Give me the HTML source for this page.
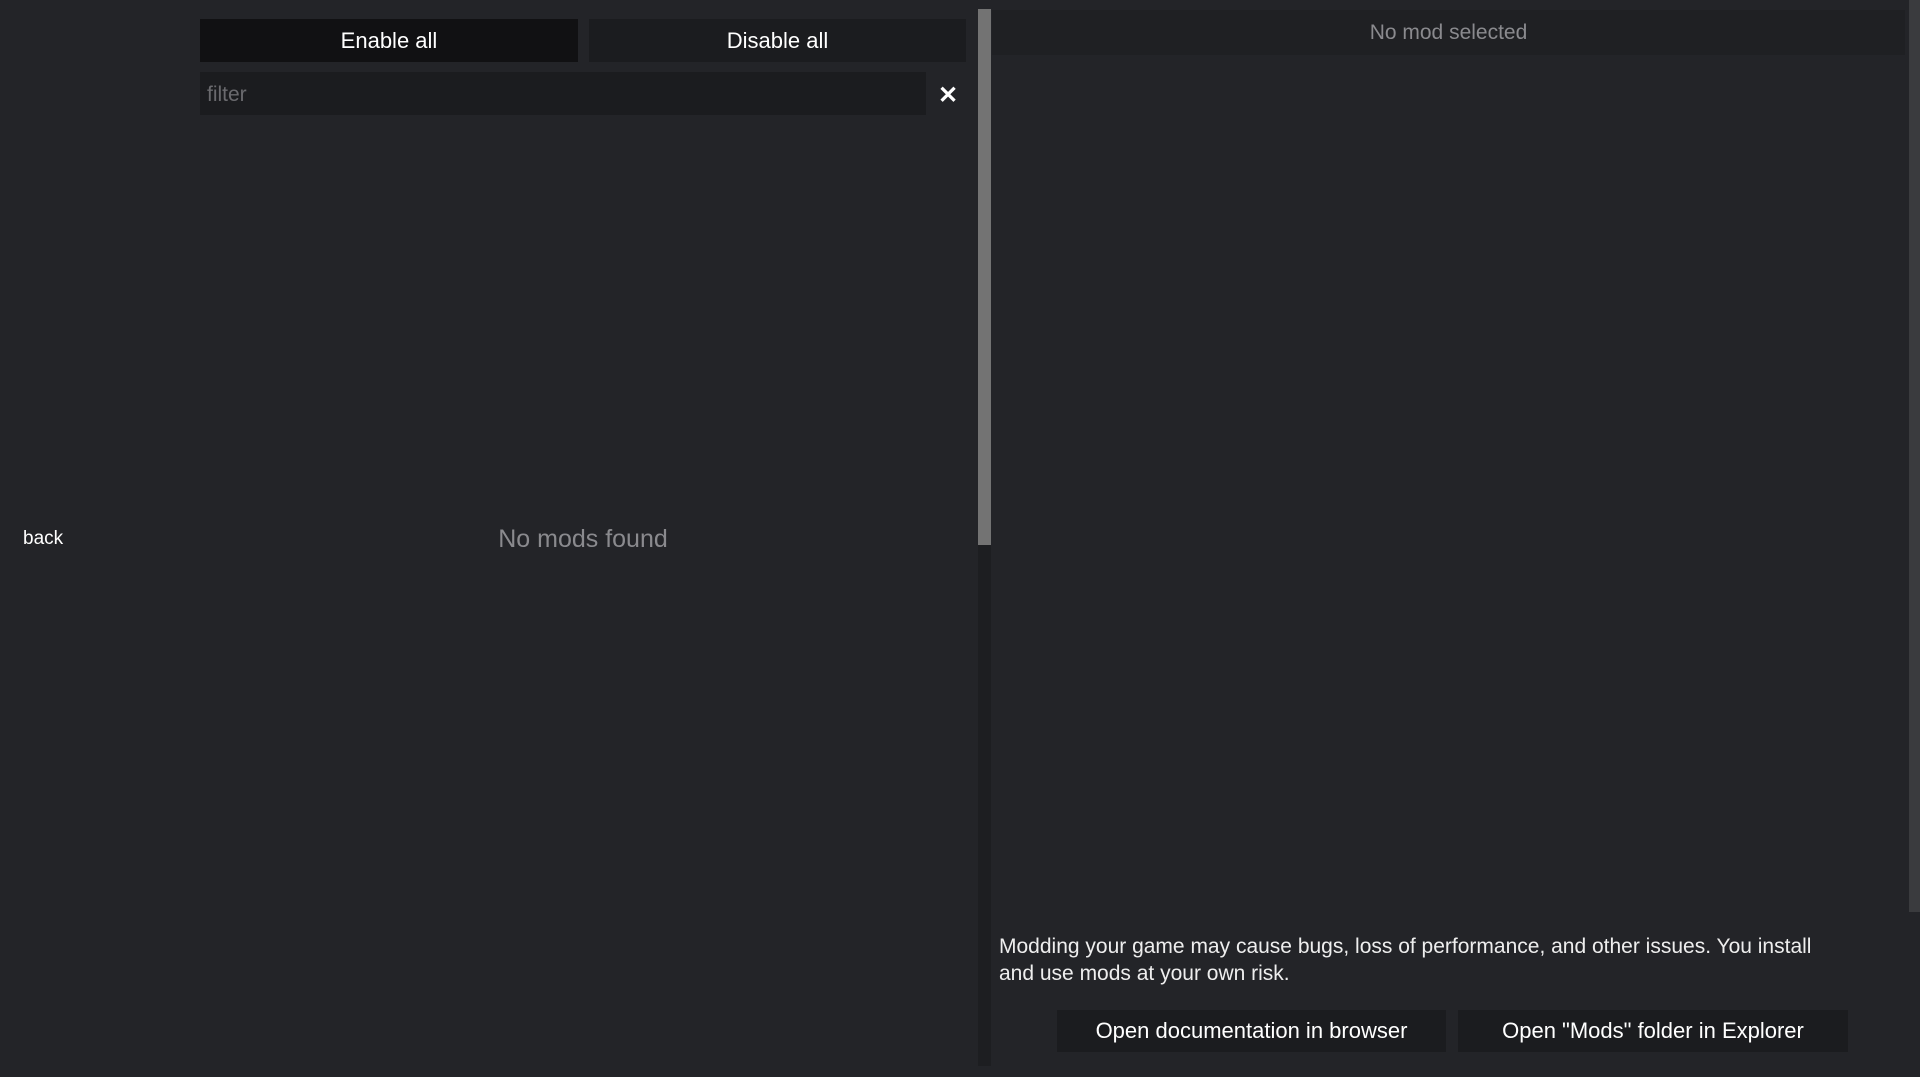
<!DOCTYPE html>
<html><head><meta charset="utf-8"><style>
*{margin:0;padding:0;box-sizing:border-box}
body{width:1920px;height:1077px;background:#232428;font-family:"Liberation Sans",sans-serif;color:#fff;position:relative;overflow:hidden}
.a{position:absolute}
.btn{position:absolute;display:flex;align-items:center;justify-content:center;font-size:22px;color:#fff}
</style></head><body>
<div class="btn" style="left:200px;top:19px;width:378px;height:43px;background:#111113">Enable all</div>
<div class="btn" style="left:589px;top:19px;width:377px;height:43px;background:#1b1c1f">Disable all</div>
<div class="a" style="left:200px;top:72px;width:726px;height:43px;background:#1b1c1f;color:#6a6a6e;font-size:21px;line-height:45px;padding-left:7px">filter</div>
<div class="a" style="left:938px;top:84px;font-size:24px;font-weight:bold;line-height:24px">✕</div>
<div class="a" style="left:978px;top:9px;width:13px;height:1057px;background:#1d1e21"></div>
<div class="a" style="left:978px;top:9px;width:13px;height:536px;background:#737373"></div>
<div class="a" style="left:992px;top:10px;width:913px;height:45px;background:#1f2023"></div>
<div class="a" style="left:992px;top:21px;width:913px;text-align:center;font-size:21px;color:#8a8a8e">No mod selected</div>
<div class="a" style="left:1909px;top:0;width:11px;height:912px;background:#3a3b3e"></div>
<div class="a" style="left:23px;top:528px;font-size:19px">back</div>
<div class="a" style="left:400px;top:525px;width:366px;text-align:center;font-size:25px;color:#8a8a8e">No mods found</div>
<div class="a" style="left:999px;top:933px;width:845px;font-size:21px;line-height:27px;color:#eee">Modding your game may cause bugs, loss of performance, and other issues. You install and use mods at your own risk.</div>
<div class="btn" style="left:1057px;top:1010px;width:389px;height:42px;background:#1b1c1f">Open documentation in browser</div>
<div class="btn" style="left:1458px;top:1010px;width:390px;height:42px;background:#1b1c1f">Open "Mods" folder in Explorer</div>
</body></html>
